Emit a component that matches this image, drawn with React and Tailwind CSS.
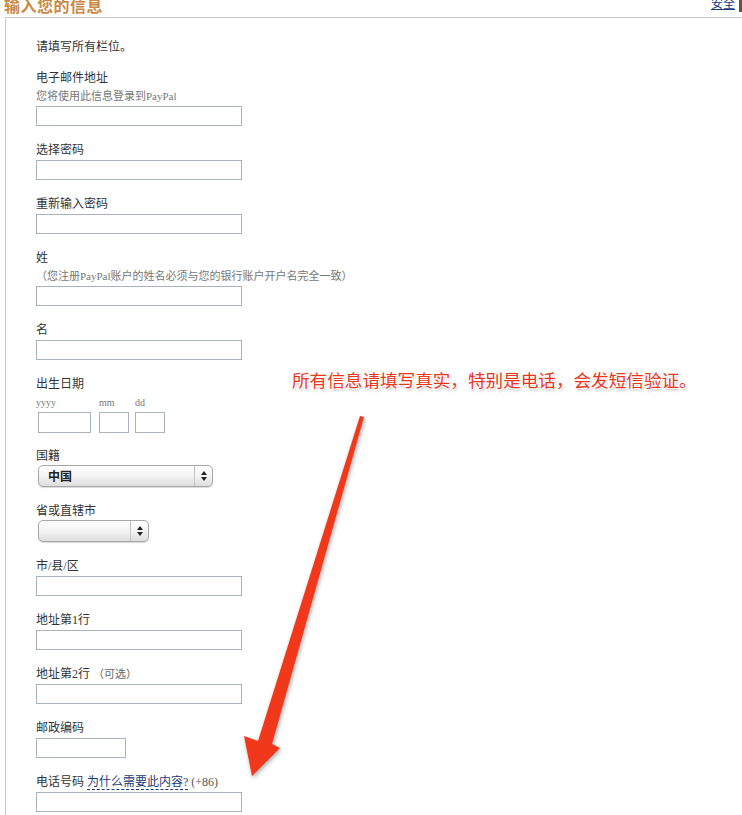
import React from "react";

const serif = { fontFamily: '"Liberation Serif", "Noto Sans CJK SC", serif' };

function Field({ label, sub, children }) {
  return (
    <div className="mt-[14px]">
      <div className="h-[18px] leading-[21px] text-[12px] text-[#333]">{label}</div>
      {sub && <div className="h-[18px] leading-[20px] text-[11px] text-[#777]">{sub}</div>}
      <div className="mt-[2px]">{children}</div>
    </div>
  );
}

function Input({ w = "w-[206px]" }) {
  return <div className={`${w} h-[20px] border border-[#a9b3bf] bg-white`} />;
}

function Select({ w, value }) {
  return (
    <div
      className={`${w} ml-[2px] h-[22px] rounded-[5px] border border-[#a7a7a7] bg-gradient-to-b from-white via-[#f3f3f3] to-[#dedede] shadow-[0_1px_1px_rgba(0,0,0,0.15)] flex items-center`}
    >
      <div className="flex-1 pl-[9px] text-[12px] font-bold text-[#222]" style={{ fontFamily: '"Noto Sans CJK SC", sans-serif' }}>
        {value}
      </div>
      <div className="w-[18px] h-full border-l border-[#c4c4c4] flex items-center justify-center">
        <svg width="6" height="10" viewBox="0 0 6 10">
          <path d="M3 0 L6 4 L0 4 Z" fill="#222" />
          <path d="M0 6 L6 6 L3 10 Z" fill="#222" />
        </svg>
      </div>
    </div>
  );
}

export default function App() {
  return (
    <div className="relative w-[742px] h-[815px] overflow-hidden bg-white" style={serif}>
      <div className="h-[17px] flex justify-between items-start">
        <div
          className="ml-[4px] mt-[-5px] text-[16px] leading-[20px] font-bold text-[#c98a45] tracking-[0.5px]"
          style={{ fontFamily: '"Noto Sans CJK SC", sans-serif' }}
        >
          输入您的信息
        </div>
        <div className="flex items-start">
          <span className="mt-[-4px] text-[12px] leading-[16px] text-[#1c3a78] underline">安全</span>
          <div className="ml-[4px] w-[3px] h-[12px] bg-[#6b5432]" />
        </div>
      </div>
      <div className="ml-[5px] h-[800px] border-t border-l border-[#c8c8c8] pl-[30px] pt-[19px]">
        <div className="h-[18px] leading-[21px] text-[12px] text-[#333]">请填写所有栏位。</div>
        <div className="mt-[-1px]">
          <Field label="电子邮件地址" sub="您将使用此信息登录到PayPal">
            <Input />
          </Field>
        </div>
        <Field label="选择密码">
          <Input />
        </Field>
        <Field label="重新输入密码">
          <Input />
        </Field>
        <Field label="姓" sub="（您注册PayPal账户的姓名必须与您的银行账户开户名完全一致）">
          <Input />
        </Field>
        <Field label="名">
          <Input />
        </Field>
        <div className="mt-[14px]">
          <div className="h-[18px] leading-[21px] text-[12px] text-[#333]">出生日期</div>
          <div className="h-[18px] leading-[22px] text-[10px] text-[#777] relative">
            <span className="absolute left-0">yyyy</span>
            <span className="absolute left-[63px]">mm</span>
            <span className="absolute left-[99px]">dd</span>
          </div>
          <div className="mt-[2px] ml-[2px] flex">
            <div className="w-[53px] h-[21px] border border-[#a9b3bf]" />
            <div className="ml-[8px] w-[30px] h-[21px] border border-[#a9b3bf]" />
            <div className="ml-[6px] w-[30px] h-[21px] border border-[#a9b3bf]" />
          </div>
        </div>
        <div className="mt-[13px]">
          <div className="h-[18px] leading-[21px] text-[12px] text-[#333]">国籍</div>
          <div className="mt-[1px]">
            <Select w="w-[175px]" value="中国" />
          </div>
        </div>
        <div className="mt-[14px]">
          <div className="h-[18px] leading-[21px] text-[12px] text-[#333]">省或直辖市</div>
          <div className="mt-[1px]">
            <Select w="w-[111px]" value="" />
          </div>
        </div>
        <Field label="市/县/区">
          <Input />
        </Field>
        <Field label="地址第1行">
          <Input />
        </Field>
        <Field
          label={
            <span>
              地址第2行 <span className="text-[11px] text-[#666]">（可选）</span>
            </span>
          }
        >
          <Input />
        </Field>
        <Field label="邮政编码">
          <Input w="w-[90px]" />
        </Field>
        <Field
          label={
            <span>
              电话号码{" "}
              <span className="text-[#1c3a78] border-b border-dashed border-[#1c3a78]">为什么需要此内容?</span>{" "}
              <span className="text-[#555]">(+86)</span>
            </span>
          }
        >
          <Input />
        </Field>
      </div>

      <div
        className="absolute left-[292px] top-[368px] text-[17.6px] leading-[24px] text-[#e8361c] whitespace-nowrap [text-shadow:1px_1px_0_#fff,-1px_-1px_0_#fff,1px_-1px_0_#fff,-1px_1px_0_#fff,1px_2px_3px_rgba(0,0,0,0.35)]"
        style={{ fontFamily: '"Noto Sans CJK SC", sans-serif' }}
      >
        所有信息请填写真实，特别是电话，会发短信验证。
      </div>

      <svg
        className="absolute left-0 top-0 drop-shadow-[1px_2px_2px_rgba(0,0,0,0.35)]"
        width="742"
        height="815"
        viewBox="0 0 742 815"
      >
        <polygon
          points="360,416 364,417 272,744 280,748 252,776 244,736 258,741"
          fill="#f1381a"
        />
      </svg>
    </div>
  );
}
